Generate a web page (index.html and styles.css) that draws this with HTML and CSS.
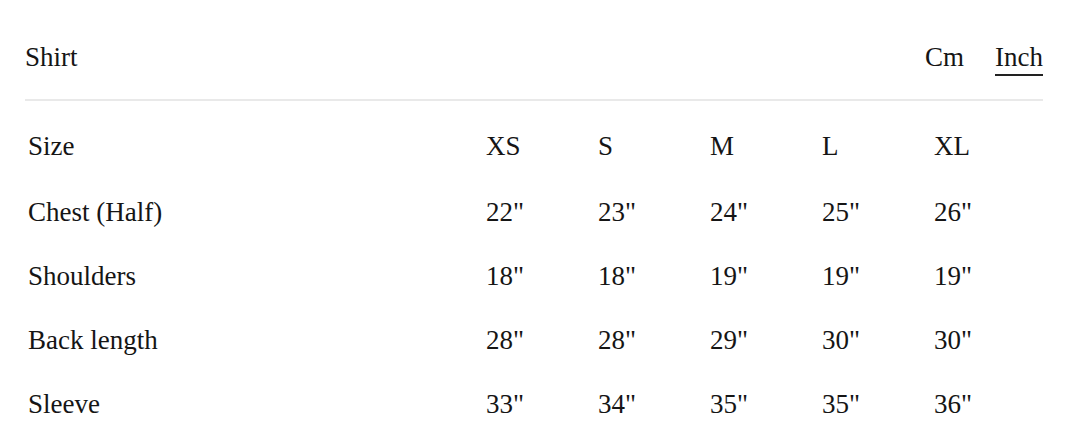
FILE: index.html
```html
<!DOCTYPE html>
<html>
<head>
<meta charset="utf-8">
<link rel="stylesheet" href="styles.css">
</head>
<body>
<div class="chart">
  <div class="header">
    <div class="title">Shirt</div>
    <div class="units">
      <span class="unit">Cm</span>
      <span class="unit active">Inch</span>
    </div>
  </div>
  <div class="table">
    <div class="row head">
      <div class="label">Size</div><div class="cell">XS</div><div class="cell">S</div><div class="cell">M</div><div class="cell">L</div><div class="cell">XL</div>
    </div>
    <div class="row">
      <div class="label">Chest (Half)</div><div class="cell">22"</div><div class="cell">23"</div><div class="cell">24"</div><div class="cell">25"</div><div class="cell">26"</div>
    </div>
    <div class="row">
      <div class="label">Shoulders</div><div class="cell">18"</div><div class="cell">18"</div><div class="cell">19"</div><div class="cell">19"</div><div class="cell">19"</div>
    </div>
    <div class="row">
      <div class="label">Back length</div><div class="cell">28"</div><div class="cell">28"</div><div class="cell">29"</div><div class="cell">30"</div><div class="cell">30"</div>
    </div>
    <div class="row">
      <div class="label">Sleeve</div><div class="cell">33"</div><div class="cell">34"</div><div class="cell">35"</div><div class="cell">35"</div><div class="cell">36"</div>
    </div>
  </div>
</div>
</body>
</html>
```

FILE: styles.css
```css
html, body {
  margin: 0;
  padding: 0;
  background: #ffffff;
}
body {
  font-family: "Liberation Serif", "DejaVu Serif", serif;
  color: #151515;
  font-size: 27px;
}
.chart {
  padding: 40px 41px 0 25px;
}
.header {
  display: flex;
  justify-content: space-between;
  align-items: flex-start;
  height: 59px;
  border-bottom: 2px solid #e9e9e9;
}
.title {
  line-height: 34px;
}
.units {
  display: flex;
  gap: 31px;
}
.unit {
  line-height: 34px;
}
.unit.active {
  border-bottom: 2px solid #222222;
}
.table {
  padding-left: 3px;
  padding-top: 25px;
}
.row {
  display: grid;
  grid-template-columns: 458px repeat(5, 112px);
  height: 64px;
  line-height: 40px;
}
.row.head {
  height: 66px;
}
```
